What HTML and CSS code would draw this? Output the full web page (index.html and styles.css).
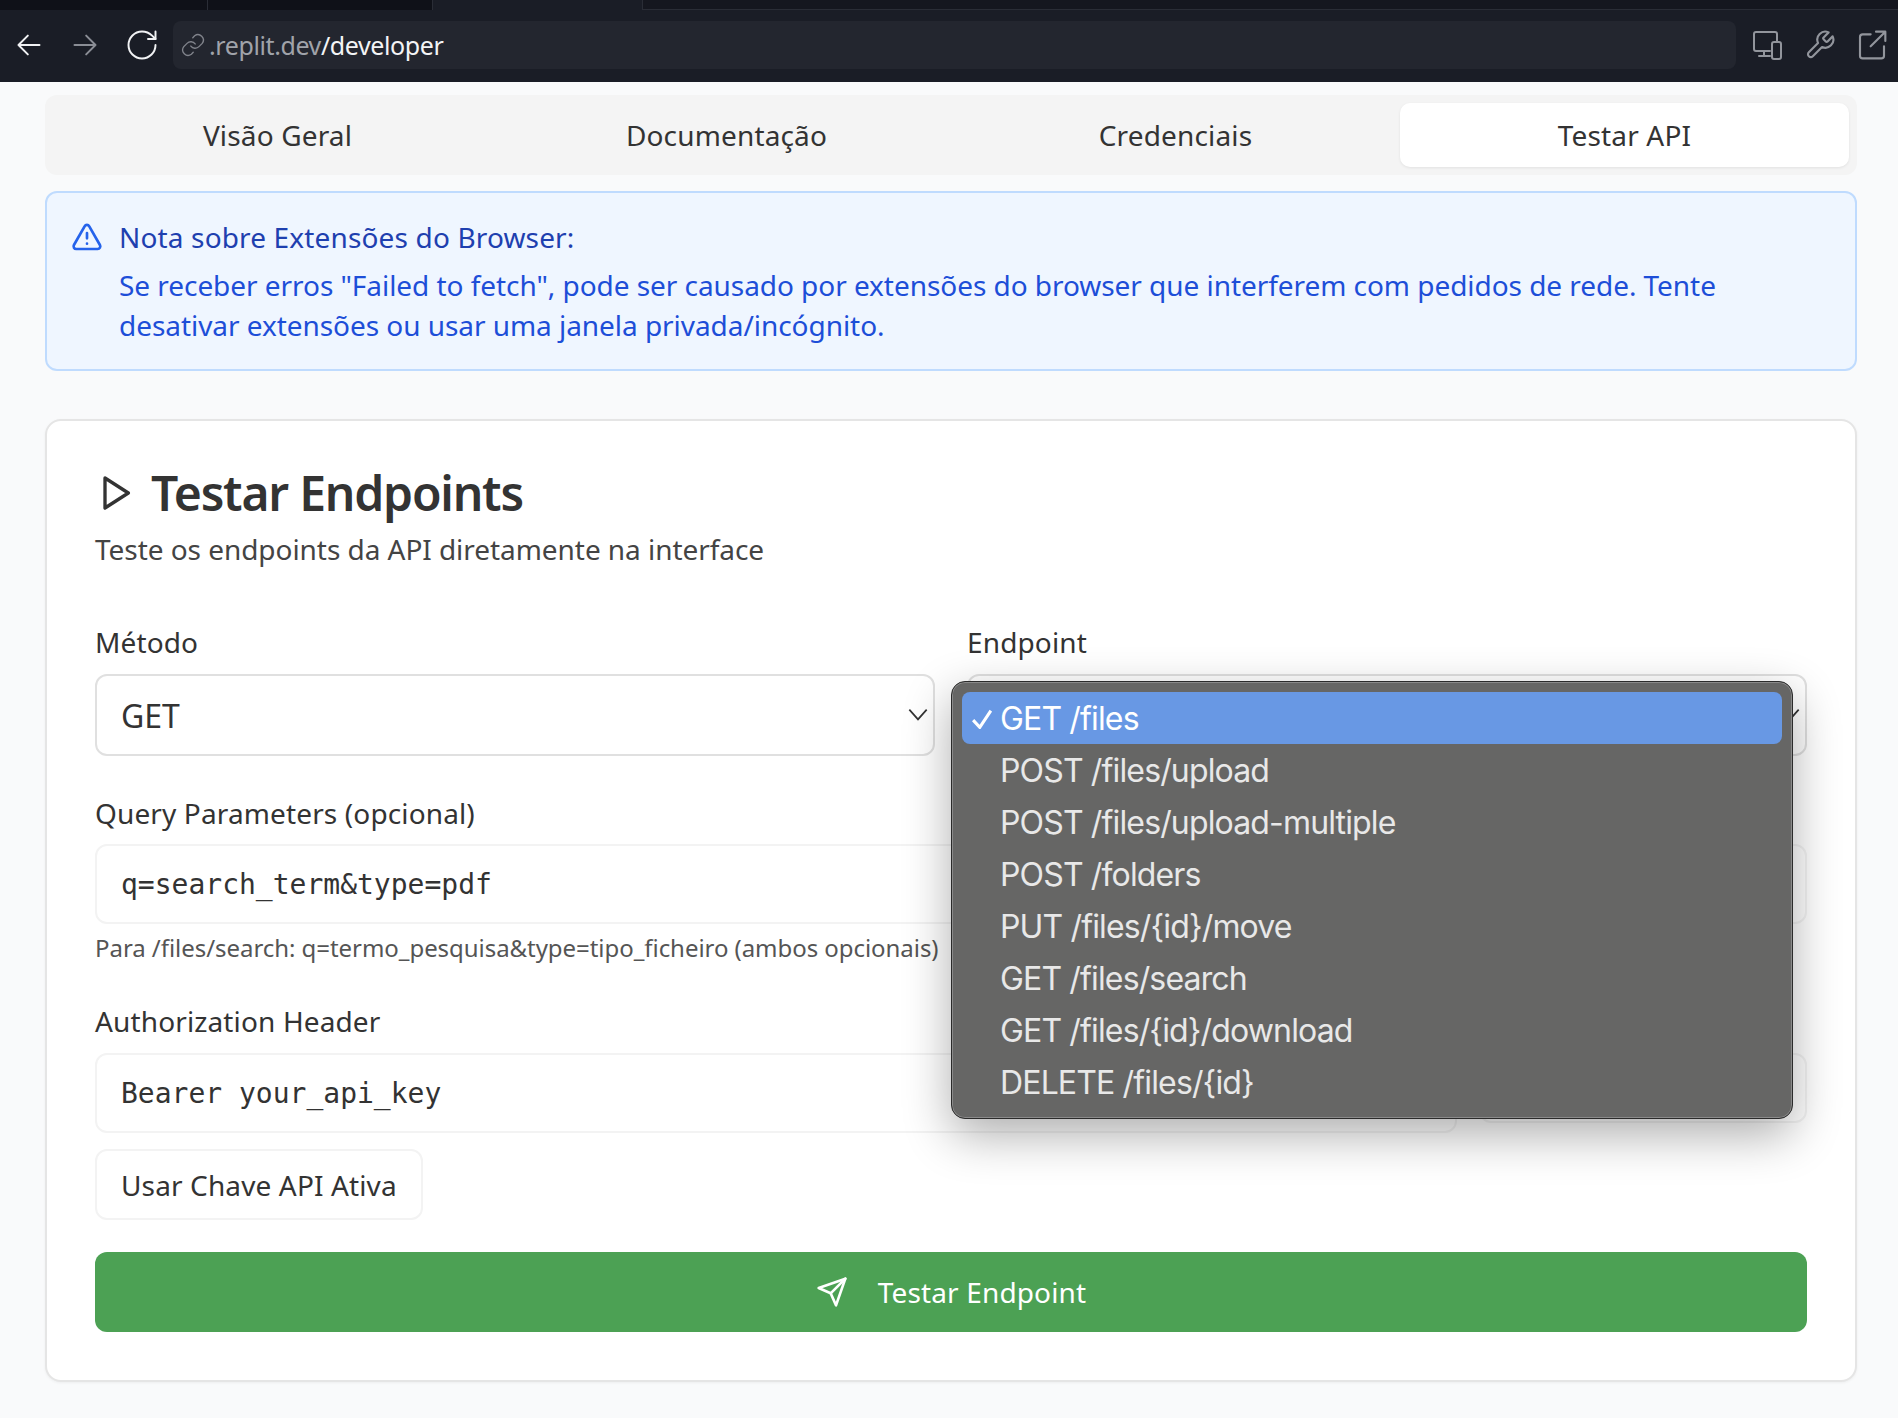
FILE: index.html
```html
<!DOCTYPE html>
<html lang="pt">
<head>
<meta charset="utf-8">
<title>Developer</title>
<link rel="stylesheet" href="styles.css">
</head>
<body>
<header class="chrome">
  <div class="tabstrip">
    <div class="strip-tab dark"></div>
    <div class="strip-tab dark second"></div>
    <div class="strip-tab current"></div>
    <div class="strip-rest"></div>
  </div>
  <div class="toolbar">
    <svg class="nav-icon bright" viewBox="0 0 24 24"><path d="M21 12H3M11 4l-8 8 8 8"/></svg>
    <svg class="nav-icon dim" viewBox="0 0 24 24"><path d="M3 12h18M13 4l8 8-8 8"/></svg>
    <svg class="nav-icon bright reload" viewBox="0 0 24 24"><path d="M21 12a9 9 0 1 1-9-9c2.520 0 4.930 1 6.740 2.740L21 8"/><path d="M21 3v5h-5"/></svg>
    <div class="address">
      <svg class="link-icon" viewBox="0 0 24 24"><path d="M10 13a5 5 0 0 0 7.500.5l3-3a5 5 0 0 0-7-7l-1.700 1.700"/><path d="M14 11a5 5 0 0 0-7.500-.5l-3 3a5 5 0 0 0 7 7l1.700-1.700"/></svg>
      <span class="host">.replit.dev</span><span class="path">/developer</span>
    </div>
    <div class="tools">
      <svg class="tool-icon" viewBox="0 0 32 32"><path d="M18 22H4a2 2 0 0 1-2-2V5a2 2 0 0 1 2-2h19a2 2 0 0 1 2 2v7"/><path d="M12 22v5M7 27h11"/><rect x="20" y="13" width="9" height="17" rx="2"/></svg>
      <svg class="tool-icon" viewBox="0 0 24 24"><path d="M14.700 6.300a1 1 0 0 0 0 1.400l1.600 1.600a1 1 0 0 0 1.400 0l3.770-3.770a6 6 0 0 1-7.940 7.940l-6.910 6.910a2.120 2.120 0 0 1-3-3l6.910-6.910a6 6 0 0 1 7.940-7.940l-3.760 3.760z"/></svg>
      <svg class="tool-icon" viewBox="0 0 24 24"><path d="M11 4H5a2 2 0 0 0-2 2v14a2 2 0 0 0 2 2h14a2 2 0 0 0 2-2v-7"/><path d="M11 13L22 2M15 2h7v7"/></svg>
    </div>
  </div>
</header>

<main class="page">
  <nav class="tabs">
    <div class="tab">Visão Geral</div>
    <div class="tab">Documentação</div>
    <div class="tab">Credenciais</div>
    <div class="tab active">Testar API</div>
  </nav>

  <section class="alert">
    <svg class="alert-icon" viewBox="0 0 24 24"><path d="M21.700 18l-8-14a2 2 0 0 0-3.500 0l-8 14A2 2 0 0 0 4 21h16a2 2 0 0 0 1.700-3z"/><path d="M12 9v4M12 17h.01"/></svg>
    <div>
      <h4 class="alert-title">Nota sobre Extensões do Browser:</h4>
      <p class="alert-text">Se receber erros "Failed to fetch", pode ser causado por extensões do browser que interferem com pedidos de rede. Tente desativar extensões ou usar uma janela privada/incógnito.</p>
    </div>
  </section>

  <section class="card">
    <h2 class="card-title">
      <svg class="play-icon" viewBox="0 0 24 24"><path d="M6 3l14 9-14 9z"/></svg>
      Testar Endpoints
    </h2>
    <p class="card-sub">Teste os endpoints da API diretamente na interface</p>

    <div class="grid-two">
      <div class="field">
        <label class="label">Método</label>
        <div class="select">GET
          <svg class="chev" viewBox="0 0 24 24"><path d="M4 7l8 9 8-9"/></svg>
        </div>
      </div>
      <div class="field">
        <label class="label">Endpoint</label>
        <div class="select">
          <svg class="chev" viewBox="0 0 24 24"><path d="M4 7l8 9 8-9"/></svg>
        </div>
      </div>
    </div>

    <div class="field query">
      <label class="label">Query Parameters (opcional)</label>
      <div class="input mono">q=search_term&amp;type=pdf</div>
      <p class="hint">Para /files/search: q=termo_pesquisa&amp;type=tipo_ficheiro (ambos opcionais)</p>
    </div>

    <div class="field auth">
      <label class="label">Authorization Header</label>
      <div class="auth-row">
        <div class="input mono auth-input">Bearer your_api_key</div>
        <div class="ghost-btn side"></div>
      </div>
    </div>

    <div class="ghost-btn use-key">Usar Chave API Ativa</div>

    <div class="submit">
      <svg class="send-icon" viewBox="0 0 24 24"><path d="M22 2l-7 20-4-9-9-4z"/><path d="M22 2L11 13"/></svg>
      <span>Testar Endpoint</span>
    </div>

    <ul class="menu">
      <li class="menu-item selected"><svg class="tick" viewBox="0 0 18 18"><path d="M1 10l6 6.500L17 1.500"/></svg>GET /files</li>
      <li class="menu-item">POST /files/upload</li>
      <li class="menu-item">POST /files/upload-multiple</li>
      <li class="menu-item">POST /folders</li>
      <li class="menu-item">PUT /files/{id}/move</li>
      <li class="menu-item">GET /files/search</li>
      <li class="menu-item">GET /files/{id}/download</li>
      <li class="menu-item">DELETE /files/{id}</li>
    </ul>
  </section>
</main>
</body>
</html>
```

FILE: styles.css
```css
* { box-sizing: border-box; }
html, body { margin: 0; padding: 0; }
body {
  width: 1898px;
  height: 1418px;
  overflow: hidden;
  background: #f9fafb;
  color: #333;
  font-family: "Noto Sans", sans-serif;
  letter-spacing: -0.05px;
}
.chrome { height: 82px; background: #1a1d26; display: flex; flex-direction: column; }
.tabstrip { height: 10px; display: flex; background: #15171f; }
.strip-tab { height: 10px; }
.strip-tab.dark { width: 208px; background: #0f1118; border-right: 1px solid #2a2d36; }
.strip-tab.second { width: 225px; }
.strip-tab.current { width: 210px; background: #1a1d26; border-right: 1px solid #2a2d36; }
.strip-rest { flex: 1; border-bottom: 1px solid #2a2d36; }
.toolbar { height: 72px; display: flex; align-items: center; padding: 0 0 2px 15px; }
.nav-icon { width: 28px; height: 28px; fill: none; stroke-width: 1.700; stroke-linecap: round; stroke-linejoin: round; margin-right: 28px; flex: none; }
.nav-icon.bright { stroke: #f1f2f4; }
.nav-icon.dim { stroke: #8a8d95; margin-right: 25px; }
.nav-icon.reload { width: 36px; height: 36px; stroke-width: 1.300; margin-right: 13px; }
.address {
  width: 1563px; height: 48px; background: #23262f; border-radius: 8px; flex: none;
  display: flex; align-items: center; padding-left: 7px;
  font-size: 25px; letter-spacing: -0.4px;
}
.link-icon { width: 26px; height: 26px; fill: none; stroke: #80838b; stroke-width: 1.300; stroke-linecap: round; margin-right: 3px; flex: none; }
.host { color: #a0a3aa; }
.path { color: #f3f4f6; }
.tools { display: flex; gap: 20px; margin-left: 16px; flex: none; }
.tool-icon { width: 32px; height: 32px; fill: none; stroke: #92959c; stroke-width: 1.600; stroke-linecap: round; stroke-linejoin: round; }
.tool-icon:first-child { stroke-width: 2; }

.page { padding: 13px 41px 0 45px; position: relative; }
.tabs {
  height: 80px; background: #f4f4f4; border-radius: 12px; padding: 8px;
  display: grid; grid-template-columns: repeat(4, 1fr);
}
.tab { display: flex; align-items: center; justify-content: center; font-size: 28px; letter-spacing: 0.15px; border-radius: 10px; color: #333; }
.tab.active { background: #fff; box-shadow: 0 1px 3px rgba(0,0,0,.08); }

.alert {
  margin-top: 16px; height: 180px; background: #eff6ff; border: 2px solid #bfdbfe; border-radius: 12px;
  padding: 24px 24px 0 24px; display: flex; gap: 16px;
}
.alert-icon { width: 32px; height: 32px; fill: none; stroke: #2563eb; stroke-width: 2; stroke-linecap: round; stroke-linejoin: round; flex: none; margin-top: 4px; }
.alert-title { margin: 0; font-size: 28px; font-weight: 400; letter-spacing: 0.15px; line-height: 40px; color: #1e40af; }
.alert-text { margin: 8px 0 0; font-size: 28px; line-height: 40px; color: #1d4ed8; }

.card {
  position: relative; margin-top: 48px; height: 963px; background: #fff;
  border: 2px solid #e5e5e5; border-radius: 16px; padding: 40px 48px 0 48px;
  box-shadow: 0 1px 3px rgba(0,0,0,.05);
}
.card-title { margin: 0; display: flex; align-items: center; gap: 16px; font-size: 48px; font-weight: 600; letter-spacing: -1.2px; line-height: 64px; color: #333; }
.play-icon { width: 40px; height: 40px; fill: none; stroke: #333; stroke-width: 2; stroke-linejoin: round; stroke-linecap: round; flex: none; }
.card-sub { margin: 4px 0 0; font-size: 28px; line-height: 40px; color: #444; }

.grid-two { display: grid; grid-template-columns: 1fr 1fr; gap: 32px; margin-top: 53px; }
.field { display: flex; flex-direction: column; }
.label { font-size: 28px; letter-spacing: 0.13px; line-height: 40px; color: #333; }
.select {
  position: relative; height: 82px; margin-top: 12px; border: 2px solid #e0e0e0; border-radius: 12px;
  padding: 0 24px; display: flex; align-items: center; font-size: 32px; color: #333;
}
.chev { position: absolute; right: 2px; top: 26px; width: 26px; height: 26px; fill: none; stroke: #333; stroke-width: 1.600; }
.query { margin-top: 37px; }
.input {
  height: 80px; margin-top: 11px; border: 2px solid #f3f3f3; border-radius: 12px;
  padding: 0 24px; display: flex; align-items: center; font-size: 28px; color: #333;
}
.mono { font-family: "DejaVu Sans Mono", monospace; letter-spacing: 0; }
.hint { margin: 7px 0 0; font-size: 24px; line-height: 34px; color: #555; }
.auth { margin-top: 36px; }
.auth-row { display: flex; gap: 22px; align-items: flex-start; margin-top: 12px; }
.auth-row .input { margin-top: 0; flex: 1; }
.ghost-btn { border: 2px solid #f3f3f3; border-radius: 12px; background: #fff; }
.ghost-btn.side { width: 328px; height: 70px; flex: none; }
.use-key { width: 328px; height: 71px; margin-top: 16px; padding: 0 24px; display: flex; align-items: center; white-space: nowrap; font-size: 28px; letter-spacing: 0.13px; color: #333; }
.submit {
  margin-top: 32px; height: 80px; background: #4ca154; border-radius: 12px;
  display: flex; align-items: center; justify-content: center; gap: 30px;
  color: #fff; font-size: 28px; letter-spacing: 0.15px;
}
.send-icon { width: 32px; height: 32px; fill: none; stroke: #fff; stroke-width: 2; stroke-linejoin: round; stroke-linecap: round; }

.menu {
  position: absolute; left: 904px; top: 260px; width: 842px; height: 438px;
  margin: 0; padding: 10px; list-style: none;
  background: #666665; border: 1.500px solid #2b2b2b; border-radius: 14px;
  box-shadow: inset 0 0 0 1px #8a8a8a, 0 16px 48px rgba(0,0,0,.32);
  font-family: Inter, sans-serif; font-size: 32px; letter-spacing: -0.85px; color: #e8e8e8;
}
.menu-item { height: 52px; padding-left: 38px; position: relative; display: flex; align-items: center; border-radius: 8px; }
.menu-item.selected { background: #6898e4; color: #fff; }
.tick { position: absolute; left: 10px; top: 17px; width: 20px; height: 20px; fill: none; stroke: #fff; stroke-width: 2.800; }
```
